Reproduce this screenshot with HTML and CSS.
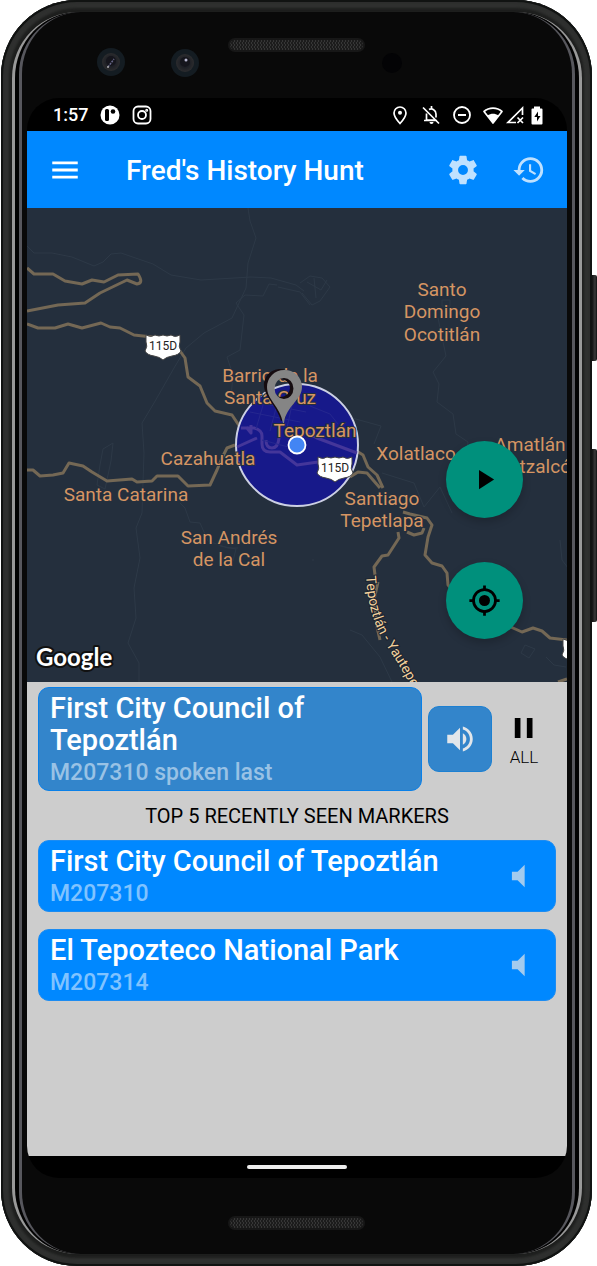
FILE: index.html
```html
<!DOCTYPE html>
<html lang="en">
<head>
<meta charset="utf-8">
<meta name="viewport" content="width=device-width, initial-scale=1">
<title>Fred's History Hunt</title>
<link rel="stylesheet" href="styles.css">
</head>
<body>
<div class="phone">
  <div class="side-keys"><span class="key key-power"></span><span class="key key-volume"></span></div>
  <div class="case"><div class="rim"><div class="glass">
    <div class="bezel bezel-top">
      <svg class="bezel-art" viewBox="0 0 540 86" aria-hidden="true">
        <defs>
          <pattern id="mesh" width="3" height="4" patternUnits="userSpaceOnUse"><rect width="3" height="4" fill="#1c1c1c"/><rect width="1" height="2" fill="#363636"/><rect x="2" y="2" width="1" height="2" fill="#363636"/></pattern>
          <radialGradient id="lens"><stop offset="0" stop-color="#3a3f4c"/><stop offset=".5" stop-color="#1d1f25"/><stop offset="1" stop-color="#2c2c2e"/></radialGradient>
        </defs>
        <rect x="201" y="26" width="137" height="14" rx="7" fill="#171717"/>
        <rect x="203" y="28" width="133" height="10" rx="5" fill="url(#mesh)"/>
        <circle cx="84" cy="50" r="14" fill="#141c22"/><circle cx="84" cy="50" r="9" fill="url(#lens)"/><circle cx="84" cy="49" r="5" fill="#15151c"/><path d="m81 55 6-8" stroke="#68688a" stroke-width="1.5" stroke-dasharray="2 1"/><circle cx="81" cy="55" r="1" fill="#aaa"/>
        <circle cx="158" cy="51" r="14" fill="#141c22"/><circle cx="158" cy="51" r="9" fill="url(#lens)"/><circle cx="158" cy="50" r="5" fill="#15151c"/><circle cx="159" cy="48" r="1.5" fill="#b8b8d0"/>
        <circle cx="365" cy="51" r="10" fill="#030305"/>
      </svg>
    </div>

    <div class="screen">
      <div class="status">
        <span class="clock">1:57</span>
        <svg class="badge" viewBox="0 0 20 20" aria-hidden="true"><circle cx="10" cy="10" r="9.5" fill="#fff"/><rect x="5" y="4" width="4" height="12" rx="1.5" fill="#000"/><circle cx="13" cy="6.500" r="2.300" fill="#000"/></svg>
        <svg class="badge" viewBox="0 0 20 20" fill="none" stroke="#fff" stroke-width="1.800" aria-hidden="true"><rect x="1.500" y="1.500" width="17" height="17" rx="4.500"/><circle cx="10" cy="10" r="4"/><circle cx="14.700" cy="5.300" r=".6"/></svg>
        <div class="status-right">
          <svg class="sys" viewBox="0 0 22 22" aria-hidden="true"><path d="M11 3a6 6 0 0 0-6 6c0 4 6 10.500 6 10.500S17 13 17 9a6 6 0 0 0-6-6z" fill="none" stroke="#fff" stroke-width="1.700"/><circle cx="11" cy="8.800" r="2" fill="#fff"/></svg>
          <svg class="sys" viewBox="0 0 22 22" fill="none" stroke="#fff" stroke-width="1.700" aria-hidden="true"><path d="M3 3.500 19 19.500M6.500 9.500V16H15M4 16.500h13M9 5.500c3-1.500 7 .5 7 4.500v3.500M11.500 2v3"/><path d="M9.500 18h4a2 2 0 0 1-4 0z" fill="#fff" stroke="none"/></svg>
          <svg class="sys" viewBox="0 0 22 22" fill="none" stroke="#fff" stroke-width="1.800" aria-hidden="true"><circle cx="11" cy="11" r="8"/><path d="M7 11h8"/></svg>
          <div class="signals">
            <svg class="sys" viewBox="0 0 22 22" aria-hidden="true"><path d="M2 7.500C7 3 15 3 20 7.500L11 19z" fill="none" stroke="#fff" stroke-width="1.700" stroke-linejoin="round"/><path d="M5.500 11.500c3.500-2.500 7.500-2.500 11 0L11 19z" fill="#fff"/></svg>
            <svg class="sys" viewBox="0 0 22 22" fill="none" stroke="#fff" stroke-width="1.700" aria-hidden="true"><path d="M12 18.500H4L18.500 4v7M13.500 13.500l5.500 5.500M19 13.500 13.500 19"/></svg>
            <svg class="sys" viewBox="0 0 22 22" aria-hidden="true"><path d="M8 2.500h6v2h1.500a1 1 0 0 1 1 1v14a1 1 0 0 1-1 1h-9a1 1 0 0 1-1-1v-14a1 1 0 0 1 1-1H8z" fill="#fff"/><path d="M12 7.500 8.300 13H11v4.500l3.500-5.500H12z" fill="#000"/></svg>
          </div>
        </div>
      </div>

      <header class="appbar">
        <button class="icon-btn" type="button" aria-label="Open menu"><svg viewBox="0 0 24 24"><path d="M3 18h18v-2H3zm0-5h18v-2H3zm0-7v2h18V6z"/></svg></button>
        <h1 class="app-title">Fred's History Hunt</h1>
        <button class="icon-btn soft" type="button" aria-label="Settings"><svg viewBox="0 0 24 24"><path d="M12 15.500A3.500 3.500 0 0 1 8.500 12 3.500 3.500 0 0 1 12 8.500a3.500 3.500 0 0 1 3.500 3.500 3.500 3.500 0 0 1-3.500 3.500m7.430-2.530c.04-.32.07-.64.07-.97s-.03-.66-.07-1l2.110-1.630c.19-.15.24-.42.12-.64l-2-3.460c-.12-.22-.39-.31-.61-.22l-2.490 1c-.52-.39-1.060-.73-1.690-.98l-.37-2.650A.506.506 0 0 0 14 2h-4c-.25 0-.46.18-.5.42l-.37 2.650c-.63.25-1.170.59-1.690.98l-2.490-1c-.22-.09-.49 0-.61.22l-2 3.460c-.13.22-.07.49.12.64L4.570 11c-.04.34-.07.67-.07 1s.03.65.07.97l-2.110 1.660c-.19.15-.25.42-.12.64l2 3.460c.12.22.39.3.61.22l2.490-1.010c.52.4 1.060.74 1.690.99l.37 2.650c.04.24.25.42.5.42h4c.25 0 .46-.18.5-.42l.37-2.650c.63-.26 1.170-.59 1.690-.99l2.490 1.010c.22.08.49 0 .61-.22l2-3.460c.12-.22.07-.49-.12-.64z"/></svg></button>
        <button class="icon-btn soft" type="button" aria-label="History"><svg viewBox="0 0 24 24"><path d="M13 3a9 9 0 0 0-9 9H1l3.890 3.890.07.14L9 12H6c0-3.870 3.130-7 7-7s7 3.130 7 7-3.130 7-7 7c-1.930 0-3.680-.79-4.940-2.060l-1.420 1.420A8.950 8.950 0 0 0 13 21a9 9 0 0 0 0-18zm-1 5v5l4.280 2.540.72-1.210-3.500-2.080V8z"/></svg></button>
      </header>

      <section class="map" aria-label="Map">
        <svg class="map-art" viewBox="27 208 540 474" preserveAspectRatio="xMidYMid slice">
          <defs>
            <path id="shield" d="M-17-11q5 3 9 0 4 2 8 0 4 2 8 0 4 3 9 0l0 7q-2 4 1 9-2 4-9 5-6 1-9 4-3-3-9-4-7-1-9-5 3-5 1-9z"/>
            <path id="yautepec" d="M366 576C368 610 376 630 388 648S404 674 416 696"/>
          </defs>
          <g class="trails">
            <path d="M27 246l7 7h18l20 4 22 9 9-4 8-8 10-1 32 11 18 11 30 5 50-3 20 1 25 7 8 6M248 208l2 13 6 17-8 25-2 25-14 30-28 15-18 15-12 20-20 35-12 20 2 30-2 60-6 15 4 30-6 30 2 30-8 25 11 20v51"/>
            <path d="M277 285l-8-1-6 12-18-1-9 8 8 12-4 35-13 7 6 18-2 22M278 287l22 5 10 13M300 283l10-7 12 2 8 9-10 14-8 4-10-12M307 282l14 8 6-10M314 278l2 20M442 300h8v6h-8zM438 318l8 38-13 16 6 12-2 18 16 12 3 20 12 8-4 24M103 449l10-6-2 18-6 28-8-4 3-20zM180 503l5 5 5 14 10 1 8 18 20 7 10 0M220 546l16 3-3 12M352 418l29 8-7 18M382 473l32 10 10 24 16-20 12 26M525 645l10 4-6 9-8-5zM546 657l8 8 12 2M560 540l2 20 6 8M350 630l12 5 18 22 12 25"/>
            <path d="M312 560h2"/>
          </g>
          <g class="roads">
            <path d="M27 268l7 6 19 0 12 7 17 3 10-4 12 2 14-7 20-1q6 9-1 10l-10-4-27 13-15 10-27 2-31 6"/>
            <path d="M27 324l11 4h17l13-4 14 4 19-5 9 4 10 1 14 7 18 2 28 14 5 7 3 19 12 9 7 17 8 8 17 4 6 9 5 6"/>
            <path d="M27 470h6l7 6 13-1 10-2 6-10 14 3 9 6 15 9 25-2 5 3 15-1 5-5h21l10 10 22-1 7-15 5-12 5-10 8-3"/>
            <path d="M355 450l8 5 5 12 9 8 6 13M350 477l8-5 9 1 13 15M403 512l7 2 17 4 5 7-4 12-3 18 7 8 10 3 5 7 1 12 20 22 45 21 9 4 11-4 9 3 8 7 17 2M424 528l-2 5-8 2-7-3M398 532l1 6-11 17-6 1-8 11 1 8M378 582l-4 18 3 27 3 13M558 682l9-3"/>
          </g>
          <g class="labels">
            <text x="442" y="296">Santo</text><text x="442" y="318">Domingo</text><text x="442" y="341">Ocotitlán</text>
            <text x="126" y="501">Santa Catarina</text>
            <text x="229" y="544">San Andrés</text><text x="229" y="566">de la Cal</text>
            <text x="382" y="505">Santiago</text><text x="382" y="527">Tepetlapa</text>
            <text x="416" y="460">Xolatlaco</text>
            <text x="530" y="451">Amatlán</text><text class="from-left" x="486" y="473">Quetzalcóatl</text>
          </g>
          <circle class="range" cx="297" cy="445" r="61"/>
          <g class="inner-roads">
            <path d="M241 428h13q8 2 8 8v8q0 8 8 8h10l17 13 21-3 20-3M237 447l20-9M266 440q0 8 6 8t7-10M303 431l14 7 40 15M246 427l5 6v-8"/>
          </g>
          <path class="streets" d="M250 412l50 10M256 402l50 10M266 395l-10 34M280 393l-10 38M294 396l-8 36M310 406l20 8 8 10M262 440l30 8"/>
          <g class="labels"><text x="270" y="382">Barrio de la</text><text x="270" y="404">Santa Cruz</text><text x="315" y="437">Tepoztlán</text><text x="208" y="465">Cazahuatla</text></g>
          <g class="shields"><use href="#shield" x="163" y="346"/><use href="#shield" x="335" y="468"/><use href="#shield" x="580" y="650"/><text x="163" y="350">115D</text><text x="335" y="472">115D</text></g>
          <text class="road-name"><textPath href="#yautepec">Tepoztlán - Yautepec</textPath></text>
          <path fill-rule="evenodd" fill="#160c10" d="M279 369a16 16 0 0 0-14 22c3 9 12 16 16 30l4-2c2-14 13-18 13-31 0-11-8-19-19-19zm2 10a9 9 0 1 1 0 18 9 9 0 0 1 0-18z"/>
          <path fill-rule="evenodd" fill="#858585" d="M284 370a17 17 0 0 0-17 17c0 13 13 19 16 36h1c2-17 18-23 18-36a17 17 0 0 0-18-17zm0 8a9 10 0 1 1 0 21 9 10 0 0 1 0-21z"/>
          <circle cx="297" cy="445" r="8.500" fill="#4285f4" stroke="#fff" stroke-width="1.800"/>
          <text class="google" x="36" y="666">Google</text>
        </svg>
        <div class="fabs">
          <button class="fab" type="button" aria-label="Play"><svg viewBox="0 0 24 24"><path d="M8 5v14l11-7z"/></svg></button>
          <button class="fab" type="button" aria-label="My location"><svg viewBox="0 0 24 24"><circle cx="12" cy="12" r="4"/><path d="M12 1v4M12 19v4M1 12h4M19 12h4" stroke="#000" stroke-width="2"/><circle cx="12" cy="12" r="8" fill="none" stroke="#000" stroke-width="2"/></svg></button>
        </div>
      </section>

      <section class="panel">
        <div class="now">
          <article class="card now-card"><h2 class="card-title">First City Council of Tepoztlán</h2><p class="card-sub">M207310 spoken last</p></article>
          <button class="speak" type="button" aria-label="Speak again"><svg viewBox="0 0 24 24"><path d="M14 3.230v2.060c2.890.86 5 3.540 5 6.710s-2.110 5.840-5 6.700v2.070c4-.91 7-4.490 7-8.770s-3-7.860-7-8.770M16.500 12c0-1.770-1-3.290-2.500-4.030V16c1.500-.71 2.500-2.240 2.500-4M3 9v6h4l5 5V4L7 9z"/></svg></button>
          <button class="pause" type="button"><svg viewBox="0 0 24 24" aria-hidden="true"><path d="M5.500 5h4v14h-4zM14 5h4v14h-4z"/></svg><span>ALL</span></button>
        </div>
        <h2 class="list-title">TOP 5 RECENTLY SEEN MARKERS</h2>
        <div class="list">
          <button class="card seen" type="button"><span class="card-text"><span class="card-title">First City Council of Tepoztlán</span><span class="card-sub">M207310</span></span><svg viewBox="0 0 24 24" aria-hidden="true"><path d="M7 9v6h4l5 5V4l-5 5z"/></svg></button>
          <button class="card seen" type="button"><span class="card-text"><span class="card-title">El Tepozteco National Park</span><span class="card-sub">M207314</span></span><svg viewBox="0 0 24 24" aria-hidden="true"><path d="M7 9v6h4l5 5V4l-5 5z"/></svg></button>
        </div>
      </section>
      <div class="navbar"><span class="handle"></span></div>
    </div>

    <div class="bezel bezel-bottom">
      <svg class="bezel-art" viewBox="0 0 540 76" aria-hidden="true"><rect x="201" y="38" width="137" height="14" rx="7" fill="#171717"/><rect x="203" y="40" width="133" height="10" rx="5" fill="url(#mesh)"/></svg>
    </div>
  </div></div></div>
</div>
</body>
</html>
```
FILE: styles.css
```css
* { box-sizing: border-box; }
body { margin: 0; background: #fff; font-family: Roboto, "Liberation Sans", sans-serif; }
h1, h2, p { margin: 0; }
button { font: inherit; color: inherit; border: 0; padding: 0; background: none; cursor: pointer; }
svg { display: block; }

/* Handset */
.phone { position: relative; display: flex; min-height: 100vh; padding: 0 5px 0 1px; }
.side-keys { position: absolute; top: 275px; right: 0; width: 10px; display: flex; flex-direction: column; gap: 88px; }
.key { background: linear-gradient(90deg, #111 50%, #3a3a3a 80%, #111); border-radius: 2px; }
.key-power { height: 86px; }
.key-volume { height: 173px; }
.case {
  position: relative; flex: 1; display: flex; min-width: 0;
  padding: 12px 10px 12px 11px; border-radius: 76px;
  background: #1d1e1d;
  box-shadow: inset 0 0 0 2px #111312, inset 0 0 4px 4px #2c2d2c, inset 0 0 3px 8px #323332;
}
.rim {
  flex: 1; display: flex; min-width: 0; padding: 0 4px; background: #020202;
  border: 0 solid #999; border-width: 0 3px; border-radius: 66px;
}
.glass {
  flex: 1; display: flex; flex-direction: column; min-width: 0; padding: 0 5px;
  background: #090909; border: 0 solid #57575d; border-width: 0 3px; border-radius: 62px;
}
.bezel-top { height: 86px; }
.bezel-bottom { height: 76px; }
.bezel-art { width: 100%; height: 100%; }

/* Screen */
.screen { flex: 1; display: grid; grid-template-rows: auto auto 1fr 1fr auto; background: #000; border-radius: 32px; overflow: hidden; }
.status { height: 33px; display: flex; align-items: center; gap: 12px; padding: 0 19px 0 26px; color: #fff; }
.clock { font-size: 18px; font-weight: 500; }
.badge { width: 20px; height: 20px; }
.status-right { display: flex; gap: 9px; margin-left: auto; }
.signals { display: flex; }
.sys { width: 22px; height: 22px; }

.appbar { height: 77px; display: flex; align-items: center; gap: 32px; padding: 0 21px; background: #08f; color: #fff; }
.app-title { flex: 1; padding: 2px 0 0 12px; font-size: 28px; font-weight: 500; line-height: 32px; white-space: nowrap; }
.icon-btn svg { width: 34px; height: 34px; fill: currentColor; }
.soft { color: #bfe1ff; }

/* Map */
.map { position: relative; background: #242f3d; overflow: hidden; }
.map-art { position: absolute; inset: 0; width: 100%; height: 100%; }
.trails { fill: none; stroke: #2d3947; stroke-width: 1; }
.roads { fill: none; stroke: #746855; stroke-width: 3; stroke-linejoin: round; }
.inner-roads { fill: none; stroke: #44369a; stroke-width: 3; stroke-linejoin: round; }
.streets { fill: none; stroke: #25278f; stroke-width: 1; }
.range { fill: #17198a; stroke: #ccd0e4; stroke-width: 2; }
.labels { font-size: 19px; fill: #d59563; text-anchor: middle; stroke: #242f3d; stroke-width: 2; paint-order: stroke; }
.from-left { text-anchor: start; }
.shields { fill: #fff; stroke: #444; stroke-width: 1; }
.shields text { font-size: 12px; fill: #222; stroke: none; text-anchor: middle; }
.road-name { font-size: 14px; fill: #f3d19c; stroke: #1c2430; stroke-width: 2; paint-order: stroke; }
.google { font-family: Lato, sans-serif; font-size: 24px; font-weight: 700; fill: #fff; stroke: #111; stroke-width: 4; stroke-linejoin: round; paint-order: stroke; }
.fabs { position: absolute; right: 44px; bottom: 43px; display: flex; flex-direction: column; gap: 44px; }
.fab { width: 77px; height: 77px; display: grid; place-items: center; border-radius: 50%; background: #00907c; box-shadow: 0 4px 8px rgba(0, 0, 0, .2); }
.fab svg { width: 33px; height: 33px; }

/* Markers */
.panel { padding: 5px 11px; background: #cdcdcd; }
.now { display: flex; align-items: center; gap: 6px; }
.card { border: 1px solid #0a80e8; border-radius: 11px; padding: 4px 11px 0; text-align: left; color: #fff; }
.now-card { flex: 1; background: #3385cb; }
.card-title { display: block; font-size: 29px; font-weight: 500; line-height: 32px; }
.card-sub { display: block; font-size: 23px; font-weight: 500; line-height: 34px; color: #99c2e5; }
.speak { width: 64px; height: 66px; display: grid; place-items: center; border: 1px solid #1c80d2; border-radius: 11px; background: #3385cb; }
.speak svg { width: 34px; height: 34px; fill: #e2e6ea; }
.speak svg, .pause svg { margin: 0 auto; }
.pause { width: 52px; margin-right: 6px; font-size: 17px; font-weight: 300; line-height: 20px; }
.pause svg { width: 34px; height: 34px; margin-bottom: 2px; }
.list-title { padding: 13px 0 12px; font-size: 20px; font-weight: 400; line-height: 24px; text-align: center; }
.list { display: flex; flex-direction: column; gap: 17px; }
.seen { display: flex; align-items: center; width: 100%; background: #08f; border-color: #1c8cf2; }
.seen .card-text { flex: 1; }
.seen .card-sub { color: #80c3ff; }
.seen svg { width: 34px; height: 34px; margin: 0 8px 4px 0; fill: #a3cbee; }
.navbar { height: 22px; display: grid; place-items: center; }
.handle { width: 100px; height: 4px; border-radius: 2px; background: #eee; }
```
